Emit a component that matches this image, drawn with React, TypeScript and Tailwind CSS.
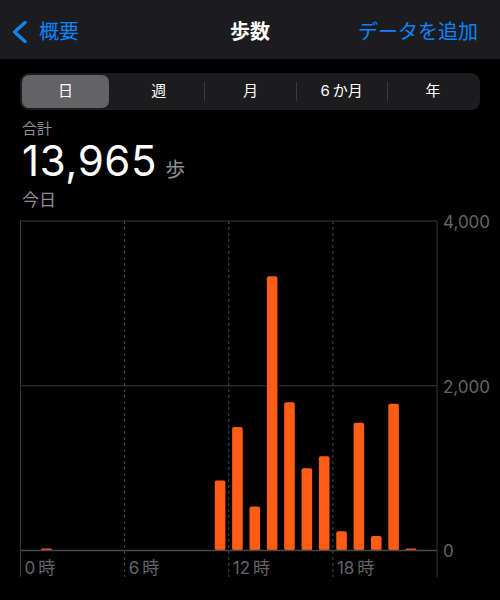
import React from "react";

const FONT = 'Inter, "Noto Sans CJK JP", sans-serif';

// steps per hour, read off the chart
const hourly: number[] = [
  0, 20, 0, 0, 0, 0, 0, 0, 0, 0, 0, 849, 1500, 533, 3330, 1800, 1000, 1145,
  233, 1550, 176, 1780, 20, 0,
];

const segments = ["日", "週", "月", "6か月", "年"];

// chart geometry (svg coords, svg starts at page y=212)
const LEFT = 20.5;
const RIGHT = 437;
const TOP = 10;
const BASE = 339.5;
const BOTTOM = 366;
const MAX = 4000;
const slot = (RIGHT - LEFT) / 24;

function StepsChart() {
  const yFor = (v: number) => BASE - (v / MAX) * (BASE - TOP);
  const mid = yFor(2000);
  const dashed = [1, 2, 3].map((i) => LEFT + slot * 6 * i);

  return (
    <svg width={500} height={370} className="block" style={{ fontFamily: FONT }}>
      {/* grid */}
      <line x1={LEFT} y1={TOP} x2={RIGHT} y2={TOP} stroke="#38383a" strokeWidth={1} />
      <line x1={LEFT} y1={mid} x2={RIGHT} y2={mid} stroke="#38383a" strokeWidth={1} />
      <line x1={LEFT} y1={TOP} x2={LEFT} y2={BOTTOM} stroke="#38383a" strokeWidth={1} />
      <line x1={RIGHT} y1={TOP} x2={RIGHT} y2={BOTTOM} stroke="#38383a" strokeWidth={1} />
      {dashed.map((x) => (
        <line
          key={x}
          x1={x}
          y1={TOP}
          x2={x}
          y2={BOTTOM}
          stroke="#48484a"
          strokeWidth={1}
          strokeDasharray="3 3"
        />
      ))}

      {/* bars */}
      {hourly.map((v, i) => {
        if (!v) return null;
        const h = Math.max(2, (v / MAX) * (BASE - TOP));
        const cx = LEFT + slot * (i + 0.5);
        return (
          <rect
            key={i}
            x={cx - 5.3}
            y={BASE - h}
            width={10.6}
            height={h}
            rx={h > 4 ? 2 : 1}
            fill="#ff5c16"
            stroke="#000"
            strokeWidth={2.5}
            paintOrder="stroke"
          />
        );
      })}

      <line x1={LEFT} y1={BASE} x2={RIGHT} y2={BASE} stroke="#48484a" strokeWidth={1.5} />

      {/* y axis */}
      <text x={443} y={17.3} fontSize={17} fill="#636366">4,000</text>
      <text x={443} y={182} fontSize={17} fill="#636366">2,000</text>
      <text x={443} y={346.3} fontSize={17} fill="#636366">0</text>

      {/* x axis */}
      {["0", "6", "12", "18"].map((t, i) => (
        <text key={t} x={LEFT + slot * 6 * i + 4} y={363} fontSize={17} fill="#636366">
          {t}
          <tspan dx={3}>時</tspan>
        </text>
      ))}
    </svg>
  );
}

export default function App() {
  return (
    <div className="w-[500px] h-[600px] bg-black overflow-hidden" style={{ fontFamily: FONT }}>
      {/* nav bar */}
      <div className="h-[59px] bg-[#1c1c1e] flex items-center pt-[5px] px-[12px] relative">
        <div className="flex items-center gap-[12px] text-[#0a84ff]">
          <svg width={15} height={22} viewBox="0 0 15 22" fill="none">
            <path
              d="M13 1.5 L2.5 11 L13 20.5"
              stroke="#0a84ff"
              strokeWidth={3.2}
              strokeLinecap="round"
              strokeLinejoin="round"
            />
          </svg>
          <span className="text-[20px] leading-none">概要</span>
        </div>
        <div className="absolute left-0 right-0 top-[5px] bottom-0 flex items-center justify-center pointer-events-none">
          <span className="text-[20px] leading-none font-bold text-white">歩数</span>
        </div>
        <span className="ml-auto mr-[10px] text-[20px] leading-none text-[#0a84ff]">
          データを追加
        </span>
      </div>

      {/* segmented control */}
      <div className="mt-[14px] mx-[20px] h-[37px] rounded-[9px] bg-[#1c1c1e] p-[2px] flex items-center">
        {segments.map((s, i) => (
          <div key={s} className="flex-1 h-full flex items-center relative">
            {i > 1 && <div className="w-px h-[19px] bg-[#3a3a3c]" />}
            <div
              className={
                i === 0
                  ? "flex-1 h-full mr-[4px] rounded-[7px] bg-[#636366] flex items-center justify-center text-white text-[15px]"
                  : "flex-1 h-full flex items-center justify-center text-white text-[15px]"
              }
            >
              {s === "6か月" ? (
                <span>
                  6<span className="ml-[3px]">か月</span>
                </span>
              ) : (
                s
              )}
            </div>
          </div>
        ))}
      </div>

      {/* summary */}
      <div className="px-[22px]">
        <div className="mt-[10px] text-[15px] leading-[18px] text-[#8e8e93]">合計</div>
        <div className="flex items-end gap-[8px] h-[47px] pb-[3px]">
          <span className="text-[42px] leading-[42px] text-white tracking-[0.6px]">13,965</span>
          <span className="text-[20px] leading-[24px] text-[#8e8e93]">歩</span>
        </div>
        <div className="text-[17px] leading-[22px] text-[#8e8e93] mt-[4px]">今日</div>
      </div>

      <StepsChart />
    </div>
  );
}
